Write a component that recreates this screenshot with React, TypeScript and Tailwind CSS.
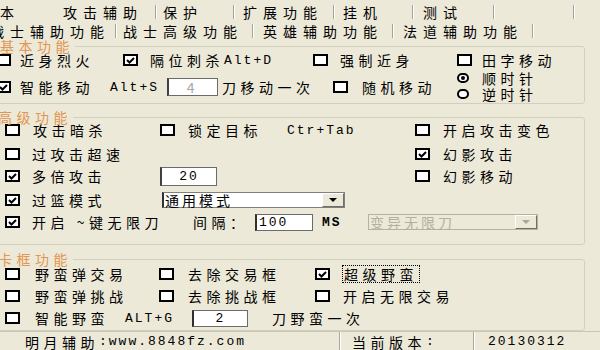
import React from "react";

const LAT = "font-['Liberation_Mono',monospace] text-[13px] tracking-[2px]";

const Box = ({ checked = false }: { checked?: boolean }) => (
  <span className="w-[15px] h-[12px] border-2 border-black bg-white flex items-center justify-center shrink-0">
    {checked && (
      <svg width="9" height="7" viewBox="0 0 9 7">
        <path d="M1 3 L3.5 5.5 L8 1" stroke="black" strokeWidth="2" fill="none" />
      </svg>
    )}
  </span>
);

const Cb = ({
  checked = false,
  className = "",
  gap = "ml-[13px]",
  children,
}: {
  checked?: boolean;
  className?: string;
  gap?: string;
  children: React.ReactNode;
}) => (
  <div className={`flex items-center shrink-0 ${className}`}>
    <Box checked={checked} />
    <span className={`flex items-center ${gap}`}>{children}</span>
  </div>
);

const Radio = ({ on = false }: { on?: boolean }) => (
  <span className="w-[12px] h-[10px] rounded-full border-2 border-black bg-white flex items-center justify-center shrink-0">
    {on && <span className="w-[4px] h-[4px] rounded-full bg-black" />}
  </span>
);

const Sep = () => <span className="w-[2px] h-[14px] border-l border-[#a3a39a] bg-white shrink-0" />;

const Arrow = ({ muted = false }: { muted?: boolean }) => (
  <span className="w-[22px] h-full bg-[#ece9d8] border border-t-white border-l-white border-r-[#716f64] border-b-[#716f64] flex items-center justify-center shrink-0">
    <svg width="8" height="4" viewBox="0 0 8 4">
      <path d="M0 0 H8 L4 4 Z" fill={muted ? "#a8a69a" : "black"} />
    </svg>
  </span>
);

const Group = ({
  label,
  className,
  labelPos,
  children,
}: {
  label: string;
  className: string;
  labelPos: string;
  children: React.ReactNode;
}) => (
  <div className={`relative -ml-[10px] w-[595px] border border-[#d0d0bf] rounded-[3px] shrink-0 ${className}`}>
    <span className={`absolute -top-[8px] bg-[#ece9d8] pr-[1px] text-[#e39552] ${labelPos}`}>{label}</span>
    {children}
  </div>
);

export default function App() {
  return (
    <div className="w-[600px] h-[350px] overflow-hidden bg-[#ece9d8] text-black font-['Noto_Sans_CJK_SC',sans-serif] text-[14px] leading-none tracking-[4.5px] flex flex-col">
      {/* tabs */}
      <div className="h-[23px] -ml-[20px] flex items-center tracking-[6px] shrink-0">
        <span className="w-[83px] shrink-0">基本</span>
        <span className="w-[92px] shrink-0">攻击辅助</span>
        <Sep />
        <span className="w-[76px] pl-[6px] shrink-0">保护</span>
        <Sep />
        <span className="w-[98px] pl-[8px] shrink-0">扩展功能</span>
        <Sep />
        <span className="w-[77px] pl-[8px] shrink-0">挂机</span>
        <Sep />
        <span className="w-[79px] pl-[9px] shrink-0">测试</span>
        <Sep />
        <span className="w-[78px] shrink-0" />
        <Sep />
      </div>
      <div className="h-[16px] -ml-[10px] flex items-center tracking-[6px] shrink-0">
        <span className="w-[125px] shrink-0">战士辅助功能</span>
        <Sep />
        <span className="w-[135px] pl-[6px] shrink-0">战士高级功能</span>
        <Sep />
        <span className="w-[138px] pl-[9px] shrink-0">英雄辅助功能</span>
        <Sep />
        <span className="w-[138px] pl-[9px] shrink-0">法道辅助功能</span>
        <Sep />
      </div>

      {/* 基本功能 */}
      <Group label="基本功能" className="mt-[7px] h-[58px] pl-[5px] pt-[3px] flex" labelPos="left-[9px]">
        <div className="w-[461px] flex flex-col shrink-0">
          <div className="h-[20px] flex items-center">
            <Cb className="w-[127px]" gap="ml-[9px]">近身烈火</Cb>
            <Cb checked className="w-[190px]" gap="ml-[12px]">
              隔位刺杀<span className={LAT}>Alt+D</span>
            </Cb>
            <Cb className="w-[144px]" gap="ml-[12px]">强制近身</Cb>
          </div>
          <div className="mt-[7px] h-[20px] flex items-center">
            <Cb checked className="w-[114px]" gap="ml-[9px]">智能移动</Cb>
            <span className={`w-[57px] shrink-0 ${LAT}`}>Alt+S</span>
            <span className="w-[51px] h-[18px] bg-white border border-[#6b6b6b] border-l-2 border-l-[#404040] flex items-center justify-center text-[#a8a8a8] shrink-0">
              4
            </span>
            <span className="w-[111px] ml-[4px] shrink-0">刀移动一次</span>
            <Cb gap="ml-[14px]">随机移动</Cb>
          </div>
        </div>
        <div className="flex flex-col">
          <Cb className="h-[20px]" gap="ml-[10px]">田字移动</Cb>
          <div className="h-[16px] flex items-center">
            <Radio on />
            <span className="ml-[13px]">顺时针</span>
          </div>
          <div className="h-[18px] flex items-center">
            <Radio />
            <span className="ml-[13px]">逆时针</span>
          </div>
        </div>
      </Group>

      {/* 高级功能 */}
      <Group label="高级功能" className="mt-[13px] h-[128px] pl-[14px] flex flex-col" labelPos="left-[7px]">
        <div className="h-[24px] flex items-center">
          <Cb className="w-[155px]">攻击暗杀</Cb>
          <Cb className="w-[255px]">
            锁定目标<span className={`ml-[25px] ${LAT}`}>Ctr+Tab</span>
          </Cb>
          <Cb>开启攻击变色</Cb>
        </div>
        <div className="h-[24px] flex items-center">
          <Cb className="w-[410px]" gap="ml-[12px]">过攻击超速</Cb>
          <Cb checked>幻影攻击</Cb>
        </div>
        <div className="h-[20px] flex items-center">
          <Cb checked className="w-[155px]" gap="ml-[12px]">多倍攻击</Cb>
          <span className="w-[57px] h-[19px] bg-white border border-[#6b6b6b] border-l-2 border-l-[#404040] flex items-center justify-center shrink-0">
            <span className={LAT}>20</span>
          </span>
          <span className="w-[198px] shrink-0" />
          <Cb>幻影移动</Cb>
        </div>
        <div className="mt-[2px] h-[24px] flex items-center">
          <Cb checked className="w-[157px]" gap="ml-[12px]">过篮模式</Cb>
          <div className="w-[183px] h-[16px] bg-white border border-[#7f7f7f] border-l-2 border-l-[#303030] flex items-center justify-between shrink-0">
            <span className="pl-[1px] tracking-[3px]">通用模式</span>
            <Arrow />
          </div>
        </div>
        <div className="h-[20px] flex items-center">
          <Cb checked className="w-[188px]" gap="ml-[12px]">开启 ~键无限刀</Cb>
          <span className="w-[62px] shrink-0">间隔：</span>
          <span className="w-[58px] h-[17px] bg-white border border-[#6b6b6b] border-l-2 border-l-[#303030] flex items-center pl-[2px] shrink-0">
            <span className={LAT}>100</span>
          </span>
          <span className={`w-[55px] pl-[9px] font-bold shrink-0 ${LAT}`}>MS</span>
          <div className="w-[170px] h-[16px] border border-[#b5b2a4] flex items-center justify-between text-[#b3b0a2] shrink-0">
            <span className="pl-[1px] tracking-[3px]">变异无限刀</span>
            <Arrow muted />
          </div>
        </div>
      </Group>

      {/* 卡框功能 */}
      <Group label="卡框功能" className="mt-[14px] h-[72px] pl-[14px] pt-[2px] flex flex-col" labelPos="left-[7px]">
        <div className="h-[24px] flex items-center">
          <Cb className="w-[154px]" gap="ml-[15px]">野蛮弹交易</Cb>
          <Cb className="w-[156px]" gap="ml-[14px]">去除交易框</Cb>
          <Cb checked gap="ml-[12px]">
            <span className="border border-dotted border-black px-[1px] py-[1px]">超级野蛮</span>
          </Cb>
        </div>
        <div className="h-[20px] flex items-center">
          <Cb className="w-[154px]" gap="ml-[15px]">野蛮弹挑战</Cb>
          <Cb className="w-[156px]" gap="ml-[14px]">去除挑战框</Cb>
          <Cb gap="ml-[13px]">开启无限交易</Cb>
        </div>
        <div className="h-[24px] flex items-center">
          <Cb className="w-[120px]" gap="ml-[15px]">智能野蛮</Cb>
          <span className={`w-[67px] shrink-0 ${LAT}`}>ALT+G</span>
          <span className="w-[56px] h-[17px] bg-white border border-[#6b6b6b] border-l-2 border-l-[#303030] flex items-center justify-center shrink-0">
            <span className={LAT}>2</span>
          </span>
          <span className="ml-[24px]">刀野蛮一次</span>
        </div>
      </Group>

      {/* status bar */}
      <div className="h-[20px] flex border-t border-[#c9c6b6] shrink-0">
        <div className="w-[339px] pl-[25px] flex items-center shrink-0">
          明月辅助<span className={LAT}>:www.8848fz.com</span>
        </div>
        <span className="w-[2px] h-full border-l border-[#aca899] bg-white shrink-0" />
        <div className="w-[132px] pl-[11px] flex items-center shrink-0">
          当前版本<span className={LAT}>:</span>
        </div>
        <span className="w-[2px] h-full border-l border-[#aca899] bg-white shrink-0" />
        <div className="pl-[13px] flex items-center">
          <span className={LAT}>20130312</span>
        </div>
      </div>
    </div>
  );
}
